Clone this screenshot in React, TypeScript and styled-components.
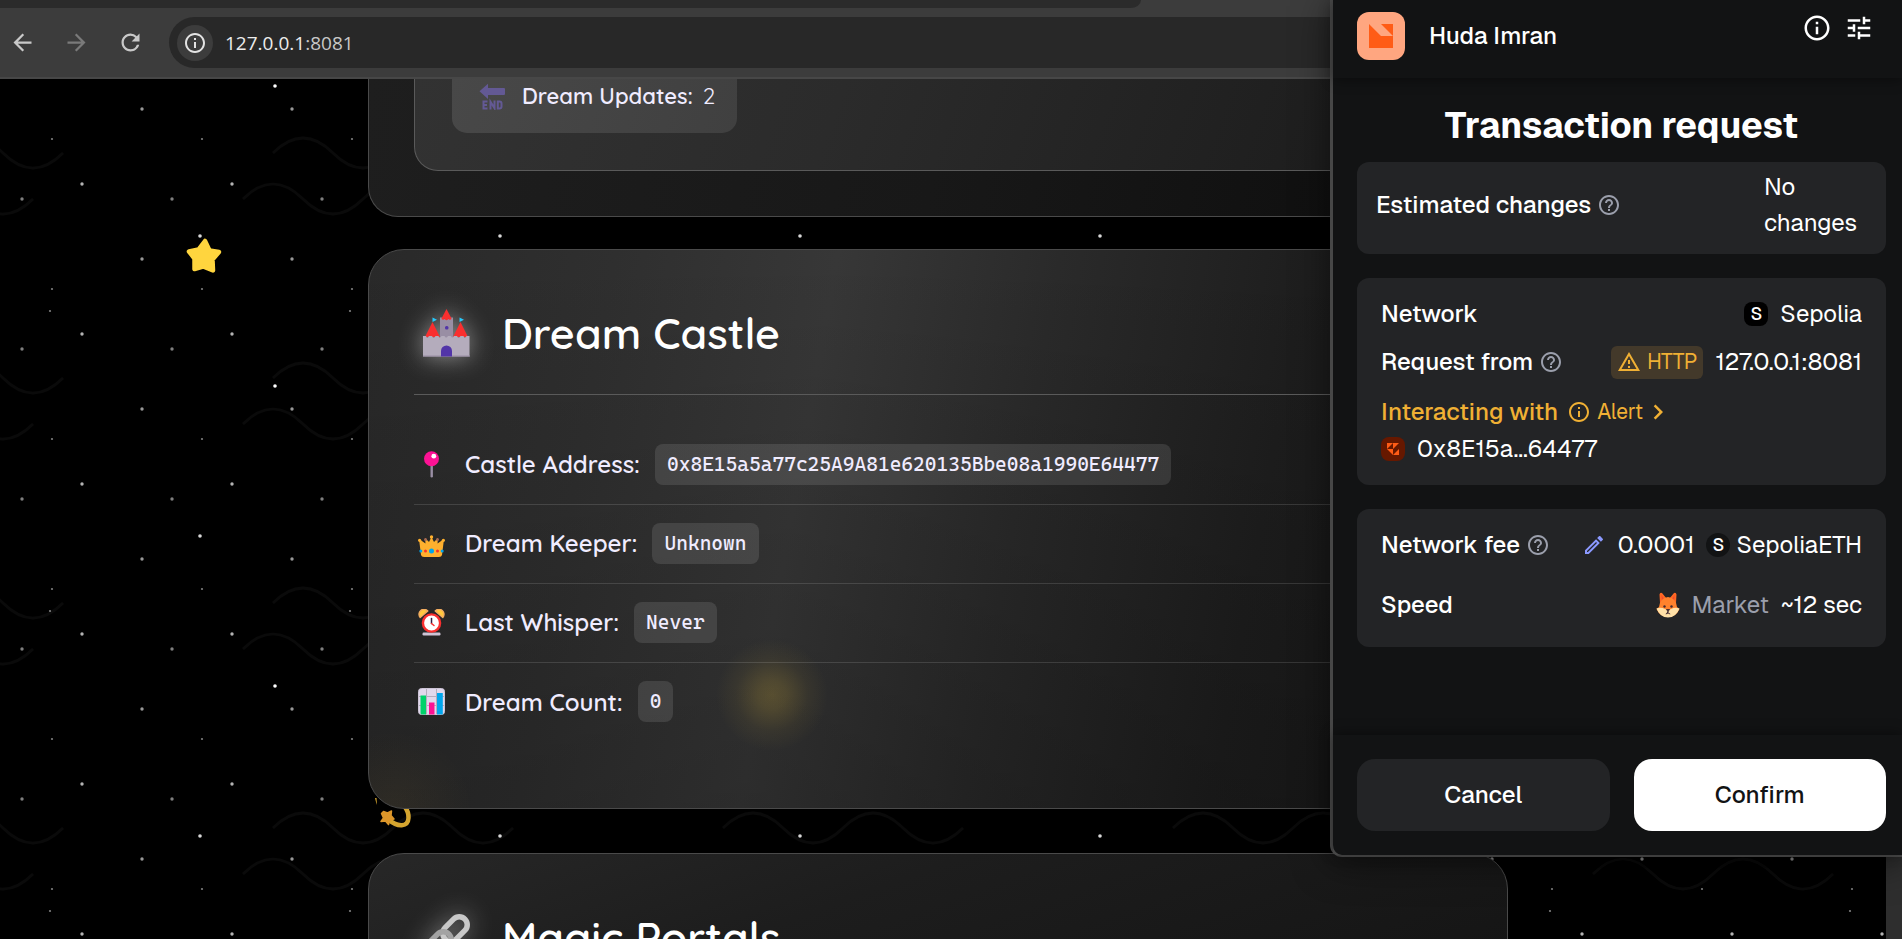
import React from "react";
import styled, { createGlobalStyle } from "styled-components";
import {
  MdArrowBack,
  MdArrowForward,
  MdChevronRight,
  MdInfoOutline,
  MdHelpOutline,
  MdOutlineEdit,
  MdOutlineWarningAmber,
  MdRefresh,
  MdTune,
} from "react-icons/md";

const pageFont = '"Quicksand", "Nunito", sans-serif';
const walletFont = '"Geist", "Inter", "Liberation Sans", sans-serif';
const codeFont = 'Consolas, "Cascadia Code", "DejaVu Sans Mono", monospace';
const chromeFont = '"Segoe UI", "Open Sans", "Noto Sans", sans-serif';

const GlobalStyle = createGlobalStyle`
  *, *::before, *::after { box-sizing: border-box; }
  body { margin: 0; background: #000; }
  h1, h2, dl, dd, dt { margin: 0; font-weight: inherit; }
  button { border: 0; padding: 0; background: none; color: inherit; font: inherit; cursor: pointer; }
  svg { display: block; flex: none; }
`;

const Screen = styled.div`
  position: relative;
  display: flex;
  flex-direction: column;
  height: 100vh;
  overflow: hidden;
  background: #000;
`;

/* ---------- Browser chrome ---------- */

const TabStrip = styled.div`
  position: relative;
  flex: none;
  height: 8px;
  background: #3c3c3c;
  &::before {
    content: "";
    display: block;
    width: 60%;
    height: 8px;
    border-bottom-right-radius: 12px 9px;
    background: #2b2b2b;
  }
`;

const Toolbar = styled.header`
  position: relative;
  display: flex;
  flex: none;
  align-items: center;
  gap: 27px;
  height: 71px;
  padding: 0 12px 0 9px;
  border-bottom: 2px solid #474747;
  background: #3c3c3c;
`;

const ToolButton = styled.button<{ $dim?: boolean }>`
  display: flex;
  color: ${(p) => (p.$dim ? "#7a7a7a" : "#c9c9c9")};
`;

const AddressBar = styled.div`
  display: flex;
  flex: 1;
  align-items: center;
  gap: 12px;
  height: 51px;
  margin-left: -2px;
  padding-left: 8px;
  border-radius: 26px;
  background: #282828;
`;

const SiteInfo = styled.button`
  display: flex;
  align-items: center;
  justify-content: center;
  width: 36px;
  height: 36px;
  border-radius: 50%;
  background: #3c3c3c;
  color: #e3e3e3;
`;

const Address = styled.span`
  color: #c7c7c7;
  font: 400 19px/26px ${chromeFont};
`;

const Host = styled.span`
  color: #ececec;
`;

/* ---------- Page ---------- */

const Sky = styled.svg`
  position: absolute;
  inset: 0;
  width: 100%;
  height: 100%;
`;

const Floating = styled.svg<{ $x: number; $y: number }>`
  position: absolute;
  left: ${(p) => p.$x}px;
  top: ${(p) => p.$y}px;
`;

const Viewport = styled.div`
  position: relative;
  display: grid;
  flex: 1;
  min-height: 0;
  grid-template-columns: 1fr 16px;
  overflow: hidden;
`;

const Scrollbar = styled.div`
  background: #2e2e2e;
`;

const Page = styled.main`
  display: flex;
  flex-direction: column;
  align-items: center;
  padding: 0 60px 0 50px;
  font-family: ${pageFont};
`;

const Card = styled.section`
  position: relative;
  flex: none;
  width: 100%;
  max-width: 1140px;
  margin-top: 44px;
  padding: 45px 45px 66px;
  border: 1px solid #4a4a4a;
  border-radius: 36px;
  background: linear-gradient(160deg, #272727 0%, #1d1d1d 35%, #121212 100%);
  color: #f0ecff;
`;

const ProfileCard = styled(Card)`
  margin-top: 0;
  padding: 0 45px 45px;
  border-top: 0;
  border-radius: 0 0 30px 30px;
  background: linear-gradient(100deg, #1e1e1e 0%, #181818 50%, #0f0f0f 90%);
`;

const CastleCard = styled(Card)`
  margin-top: 32px;
  background:
    radial-gradient(circle at 403px 445px, rgba(255, 208, 60, 0.2) 0, rgba(255, 208, 60, 0.16) 14px, rgba(255, 208, 60, 0.05) 36px, rgba(255, 208, 60, 0) 56px),
    radial-gradient(circle at 24px 560px, rgba(255, 190, 60, 0.05) 0, rgba(255, 190, 60, 0) 80px),
    linear-gradient(180deg, rgba(0, 0, 0, 0) 0%, rgba(0, 0, 0, 0.2) 100%),
    linear-gradient(100deg, #292929 0%, #2f2f2f 20%, #373737 38%, #2a2a2a 56%, #1e1e1e 76%, #161616 100%);
`;

const StatsPanel = styled.div`
  display: flex;
  padding: 0 37px 37px;
  border: 1px solid #5a5a5a;
  border-top: 0;
  border-radius: 0 0 24px 24px;
  background: linear-gradient(110deg, #323232 0%, #2b2b2b 40%, #1d1d1d 90%);
`;

const StatChip = styled.div`
  display: flex;
  align-items: center;
  height: 54px;
  padding: 0 22px 20px;
  border-radius: 0 0 15px 15px;
  background: linear-gradient(110deg, #484848, #404040);
  font-size: 22px;
  line-height: 34px;
`;

const StatIcon = styled.span`
  display: flex;
  justify-content: center;
  width: 37px;
  margin-right: 11px;
`;

const StatLabel = styled.span`
  margin-right: 10px;
  font-weight: 600;
`;

const CardHeader = styled.header`
  display: flex;
  align-items: center;
  gap: 24px;
  padding-bottom: 23px;
  border-bottom: 1px solid #5a5a5a;
`;

const CardIcon = styled.span`
  display: flex;
  justify-content: center;
  width: 64px;
  filter: drop-shadow(0 0 12px rgba(255, 255, 255, 0.5));
`;

const CardTitle = styled.h2`
  color: #fff;
  font-size: 43px;
  font-weight: 600;
  line-height: 76px;
`;

const Facts = styled.dl`
  margin-top: 31px;
`;

const Fact = styled.div`
  display: flex;
  align-items: center;
  height: 79px;
  padding-bottom: 2px;
  border-bottom: 1px solid rgba(255, 255, 255, 0.13);
  &:last-child {
    border-bottom: 0;
  }
`;

const FactIcon = styled.span`
  display: flex;
  justify-content: center;
  width: 35px;
  margin-right: 16px;
`;

const FactLabel = styled.dt`
  margin-right: 15px;
  font-size: 24px;
  font-weight: 600;
  line-height: 40px;
`;

const FactValue = styled.dd`
  padding: 0 12px;
  border-radius: 8px;
  background: rgba(255, 255, 255, 0.11);
  font: 400 20px/41px ${codeFont};
`;

/* ---------- Wallet popup ---------- */

const Wallet = styled.aside`
  position: absolute;
  top: 0;
  right: 0;
  width: 572px;
  max-width: 100%;
  border-bottom: 2px solid #474747;
  border-left: 3px solid #474747;
  border-bottom-left-radius: 12px;
  background: #121314;
  box-shadow: 0 6px 36px rgba(0, 0, 0, 0.5);
  color: #fff;
  font: 500 24px/36px ${walletFont};
`;

const WalletHeader = styled.header`
  display: flex;
  align-items: flex-start;
  padding: 12px 28px 18px 24px;
  box-shadow: 0 2px 12px rgba(0, 0, 0, 0.4);
`;

const AccountButton = styled.button`
  display: flex;
  align-items: center;
  gap: 24px;
  margin-right: auto;
`;

const HeaderButton = styled.button`
  display: flex;
  margin: 1px 0 0 12px;
`;

const WalletBody = styled.div`
  padding: 18px 16px 88px 24px;
`;

const WalletTitle = styled.h1`
  margin-bottom: 6px;
  font-size: 36px;
  font-weight: 700;
  line-height: 60px;
  text-align: center;
`;

const Box = styled.section`
  margin-bottom: 24px;
  padding: 12px 24px;
  border-radius: 12px;
  background: #232426;
`;

const ChangesBox = styled(Box)`
  display: flex;
  align-items: center;
  justify-content: space-between;
  padding: 7px 19px 13px;
`;

const FeeBox = styled(Box)`
  display: grid;
  gap: 12px;
  margin-bottom: 0;
  padding-bottom: 18px;
`;

const Row = styled.div`
  display: flex;
  align-items: center;
  justify-content: space-between;
  height: 48px;
`;

const Label = styled.span`
  display: flex;
  align-items: center;
  gap: 6px;
  svg {
    color: #9b9fac;
  }
`;

const Value = styled.span<{ $gap?: number }>`
  display: flex;
  align-items: center;
  gap: ${(p) => p.$gap ?? 12}px;
  font-weight: 400;
`;

const ChangesValue = styled.span`
  width: 103px;
  font-weight: 400;
`;

const Muted = styled.span`
  color: #9b9fac;
`;

const NetworkMark = styled.span<{ $round?: boolean }>`
  display: flex;
  align-items: center;
  justify-content: center;
  width: 24px;
  height: 24px;
  border-radius: ${(p) => (p.$round ? "50%" : "8px")};
  background: ${(p) => (p.$round ? "#121314" : "#000")};
  font-size: 18px;
  font-weight: 500;
  line-height: 24px;
`;

const HttpTag = styled.span`
  display: flex;
  align-items: center;
  gap: 6px;
  height: 33px;
  padding: 0 6px;
  border-radius: 6px;
  background: #43392a;
  color: #f0b034;
  font-size: 21px;
`;

const Contract = styled.div`
  display: grid;
  gap: 1px;
  padding: 8px 0 6px;
`;

const AlertLine = styled.div`
  display: flex;
  align-items: center;
  gap: 9px;
  color: #f0b034;
`;

const AlertButton = styled.button`
  display: flex;
  align-items: center;
  gap: 6px;
  font-size: 21px;
  font-weight: 400;
  svg:last-child {
    margin-left: -6px;
  }
`;

const WalletFooter = styled.footer`
  display: grid;
  grid-template-columns: 1fr 1fr;
  gap: 24px;
  padding: 24px 16px 24px 24px;
  box-shadow: 0 -2px 12px rgba(0, 0, 0, 0.4);
`;

const ActionButton = styled.button<{ $primary?: boolean }>`
  height: 72px;
  border-radius: 18px;
  background: ${(p) => (p.$primary ? "#fff" : "#232426")};
  color: ${(p) => (p.$primary ? "#121314" : "#fff")};
`;

/* ---------- Drawings ---------- */

type Dot = [number, number, number, number];

const denseStars: Dot[] = [
  [82, 34, 2, 0.7],
  [22, 49, 2, 0.5],
  [142, 109, 2, 0.6],
  [52, 139, 1, 0.5],
];

const sparseStars: Dot[] = [
  [275, 86, 2, 1],
  [200, 236, 2, 0.85],
  [50, 11, 1, 0.5],
];

const wave = (x: number, y: number) => `M${x} ${y}q30 -30 60 0t60 0t60 0t60 0`;

const NightSky = () => (
  <Sky aria-hidden="true">
    <defs>
      <pattern id="dense" width="150" height="150" patternUnits="userSpaceOnUse">
        {denseStars.map(([x, y, r, o]) => (
          <circle key={x} cx={x} cy={y} r={r === 2 ? 1.7 : 1.1} fill="#fff" opacity={o} />
        ))}
      </pattern>
      <pattern id="sparse" width="300" height="300" patternUnits="userSpaceOnUse">
        {sparseStars.map(([x, y, r, o]) => (
          <circle key={x} cx={x} cy={y} r={r === 2 ? 1.8 : 1.1} fill="#fff" opacity={o} />
        ))}
      </pattern>
      <pattern id="waves" width="450" height="225" patternUnits="userSpaceOnUse">
        <g fill="none" stroke="#0a0a0a" strokeWidth="2.6">
          <path d={wave(273, 153)} />
          <path d={wave(-177, 153)} />
          <path d={wave(243, 199)} />
          <path d={wave(-207, 199)} />
        </g>
      </pattern>
    </defs>
    <rect width="100%" height="100%" fill="url(#waves)" />
    <rect width="100%" height="100%" fill="url(#dense)" />
    <rect width="100%" height="100%" fill="url(#sparse)" />
  </Sky>
);

const FloatingStar = () => (
  <Floating $x={184} $y={158} width="40" height="40" viewBox="0 0 40 40" aria-hidden="true">
    <path
      d="M21 4L25.5 13.5L35 15L28.500 22.500L29 33.500L19 29.500L10.500 32L10.500 21.500L5 14.500L14.500 12.500Z"
      fill="#ffd53e"
      stroke="#ffd53e"
      strokeWidth="4.500"
      strokeLinejoin="round"
    />
  </Floating>
);

const FloatingDizzy = () => (
  <Floating $x={370} $y={711} width="46" height="46" viewBox="0 0 46 46" aria-hidden="true">
    <path d="M18 29C28 38 38 37 38.500 28C39 20 32 12 22 6" fill="none" stroke="#d5a52f" strokeWidth="4.500" />
    <path d="M5 8L6 12L7 15L6.500 8Z" fill="#d5a52f" />
    <path
      d="M13.500 21.500L17.500 23L21.500 21L21 25.500L24 29L19.800 30L18.500 34.500L15.500 31L11 31.500L13.500 28L11.500 23.500Z"
      fill="#dc962a"
      stroke="#dc962a"
      strokeWidth="1.500"
      strokeLinejoin="round"
    />
  </Floating>
);

const EndArrow = () => (
  <svg width="27" height="27" viewBox="0 0 27 27" aria-hidden="true">
    <path d="M.5 8.200L9 .8V5H25a1 1 0 0 1 1 1v5a1 1 0 0 1-1 1H9v4Z" fill="#635994" />
    <g fill="none" stroke="#635994" strokeWidth="2">
      <path d="M8.500 18.500H4.500V25.500H8.500M4.500 22H8" />
      <path d="M11.500 26.500V18.800L15.500 25.200V17.500" />
      <path d="M18.800 18.500H20.500Q22.500 18.500 22.500 20.500V23.500Q22.500 25.500 20.500 25.500H18.800Z" />
    </g>
  </svg>
);

const Castle = () => (
  <svg width="47" height="48" viewBox="0 0 47 48" aria-hidden="true">
    <path d="M17 8.500h3v1.500h2V8.500h3v1.500h2V8.500h3V32H17Z" fill="#998ea4" />
    <path d="M23.500 0L28.500 9.500a1.700 1.700 0 0 1-3.300 0a1.700 1.700 0 0 1-3.400 0a1.700 1.700 0 0 1-3.300 0Z" fill="#f92f2f" />
    <rect x="22" y="17" width="3.500" height="3.500" rx="1.500" fill="#5235a8" />
    <path d="M9.500 8.500L14 10.800L9.500 13ZM36.500 8.500L41 10.800L36.500 13Z" fill="#26c9fc" />
    <path d="M9.500 13L17 28H2ZM37.500 13L45 28H30Z" fill="#f92f2f" />
    <path
      d="M0 27h3q1 3 3 0h3q1.500 3 3.500 0h3q1 3 3 0h3q1.500 3 3.500 0h3q1 3 3 0h3q1.500 3 3.500 0h3q1 3 3 0h3V47.500H0Z"
      fill="#b4acbc"
    />
    <path d="M0 46.500H47V47.500H0Z" fill="#998ea4" />
    <path d="M18 47.500V42a5.500 5.500 0 0 1 11 0v5.500Z" fill="#5235a8" />
  </svg>
);

const Pin = () => (
  <svg width="27" height="27" viewBox="0 0 27 27" aria-hidden="true">
    <rect x="12.500" y="13" width="2.400" height="13.500" rx="1.200" fill="#998ea4" />
    <circle cx="13.500" cy="7.800" r="7.500" fill="#fc1294" />
    <circle cx="15.800" cy="5.200" r="2.400" fill="#fff" />
  </svg>
);

const Crown = () => (
  <svg width="27" height="27" viewBox="0 0 27 27" aria-hidden="true">
    <path
      d="M1 9L7.500 13.500L7 8L11 12L13.500 7L16 12L20 8L19.500 13.500L26 9L24 25Q23.500 27 21 27H6Q3.500 27 3 25Z"
      fill="#ffb02e"
    />
    <g fill="#ffb02e">
      <circle cx="1.600" cy="10.300" r="1.600" />
      <circle cx="13.500" cy="7" r="1.700" />
      <circle cx="25.400" cy="10.300" r="1.600" />
    </g>
    <g fill="#a56953">
      <circle cx="7.500" cy="9.500" r="1.500" />
      <circle cx="19.500" cy="9.500" r="1.500" />
    </g>
    <g fill="#f92f2f">
      <circle cx="7.500" cy="21" r="1.500" />
      <circle cx="19.500" cy="21" r="1.500" />
    </g>
    <g fill="#00a6ed">
      <circle cx="13.500" cy="21" r="2.500" />
      <circle cx="2.800" cy="21" r="1.500" />
      <circle cx="24.200" cy="21" r="1.500" />
    </g>
  </svg>
);

const AlarmClock = () => (
  <svg width="27" height="27" viewBox="0 0 27 27" aria-hidden="true">
    <rect x="4.500" y="23.500" width="18" height="3" rx="1.200" fill="#cdc4d6" />
    <path d="M2.200 8.500A5 5 0 0 1 9.800 2ZM24.800 8.500A5 5 0 0 0 17.200 2Z" fill="#ffc83d" stroke="#f3ad61" strokeWidth="1.400" strokeLinejoin="round" />
    <circle cx="13.500" cy="14" r="8.600" fill="#fff" stroke="#f92f2f" strokeWidth="2.400" />
    <path d="M13.500 9.500V14.500" stroke="#321b41" strokeWidth="1.500" strokeLinecap="round" />
    <path d="M13.500 14.500L16 16.500" stroke="#f92f2f" strokeWidth="1.500" strokeLinecap="round" />
  </svg>
);

const BarChart = () => (
  <svg width="27" height="27" viewBox="0 0 27 27" aria-hidden="true">
    <rect x=".5" y=".5" width="26" height="26" rx="3" fill="#e1d8ec" stroke="#cdc4d6" />
    <path d="M8.500 1V26M18.500 1V26M1 8.500H26M1 17.500H26" stroke="#b4acbc" />
    <path d="M2.500 7.500H8V26.500H4Q2.500 26.500 2.500 25Z" fill="#00d26a" />
    <path d="M11 14.500H16.500V26.500H11Z" fill="#fc1294" />
    <path d="M19 5H24.800V26.500H19Z" fill="#00a6ed" />
  </svg>
);

const Links = () => (
  <svg width="47" height="48" viewBox="0 0 47 48" aria-hidden="true">
    <g fill="none" strokeWidth="5.500">
      <rect x="-8" y="-14" width="16" height="28" rx="8" transform="translate(32 16) rotate(45)" stroke="#c8c8c8" />
      <rect x="-8" y="-14" width="16" height="28" rx="8" transform="translate(16 31) rotate(45)" stroke="#a3a3a3" />
    </g>
  </svg>
);

const AccountAvatar = () => (
  <svg width="48" height="48" viewBox="0 0 48 48" aria-hidden="true">
    <rect width="48" height="48" rx="12" fill="#ffa680" />
    <path d="M12 12L24 24H36V36H12Z" fill="#ff5c16" />
    <path d="M24 12H36V24Z" fill="#ff5c16" />
  </svg>
);

const ContractAvatar = () => (
  <svg width="24" height="24" viewBox="0 0 24 24" aria-hidden="true">
    <rect width="24" height="24" rx="8" fill="#661800" />
    <g fill="#ff5c16">
      <path d="M6 6H12L6 12Z" />
      <path d="M12 6H18L12 12V6Z" />
      <path d="M6 12H12V18Z" />
      <path d="M18 12V18H12Z" />
    </g>
  </svg>
);

const Fox = () => (
  <svg width="24" height="26" viewBox="0 0 24 26" aria-hidden="true">
    <path d="M4 11L3.500 2.500Q4 0 6 1L11 7H13L18 1Q20 0 20.500 2.500L20 11Z" fill="#ff6723" />
    <path d="M5.500 3L8.500 8L6 9.500ZM18.500 3L15.500 8L18 9.500Z" fill="#ca0b4a" opacity=".3" />
    <path d="M12 5Q20 6 21 15L23.500 17Q20 25 12 25Q4 25 .5 17L3 15Q4 6 12 5Z" fill="#ff822d" />
    <path d="M.5 16.500Q5 15 9 17L12 18.500L15 17Q19 15 23.500 16.500Q20 25.500 12 25.500Q4 25.500 .5 16.500Z" fill="#ffe1a8" />
    <circle cx="8.500" cy="14.500" r="1.200" fill="#402a32" />
    <circle cx="15.500" cy="14.500" r="1.200" fill="#402a32" />
    <path d="M10.500 17.500H13.500L12 19.500ZM12 19V21L9.800 22M12 21L14.200 22" fill="#402a32" stroke="#402a32" strokeWidth=".9" />
  </svg>
);

/* ---------- Screen ---------- */

const facts = [
  { icon: <Pin />, label: "Castle Address:", value: "0x8E15a5a77c25A9A81e620135Bbe08a1990E64477" },
  { icon: <Crown />, label: "Dream Keeper:", value: "Unknown" },
  { icon: <AlarmClock />, label: "Last Whisper:", value: "Never" },
  { icon: <BarChart />, label: "Dream Count:", value: "0" },
];

export default function App() {
  return (
    <>
      <GlobalStyle />
      <Screen>
        <NightSky />
        <TabStrip />
        <Toolbar>
          <ToolButton aria-label="Back">
            <MdArrowBack size={27} />
          </ToolButton>
          <ToolButton aria-label="Forward" $dim>
            <MdArrowForward size={27} />
          </ToolButton>
          <ToolButton aria-label="Reload">
            <MdRefresh size={27} />
          </ToolButton>
          <AddressBar>
            <SiteInfo aria-label="View site information">
              <MdInfoOutline size={24} />
            </SiteInfo>
            <Address>
              <Host>127.0.0.1</Host>:8081
            </Address>
          </AddressBar>
        </Toolbar>

        <Viewport>
          <FloatingStar />
          <FloatingDizzy />
          <Page>
            <ProfileCard>
              <StatsPanel>
                <StatChip>
                  <StatIcon>
                    <EndArrow />
                  </StatIcon>
                  <StatLabel>Dream Updates:</StatLabel>
                  <span>2</span>
                </StatChip>
              </StatsPanel>
            </ProfileCard>

            <CastleCard>
              <CardHeader>
                <CardIcon>
                  <Castle />
                </CardIcon>
                <CardTitle>Dream Castle</CardTitle>
              </CardHeader>
              <Facts>
                {facts.map((fact) => (
                  <Fact key={fact.label}>
                    <FactIcon>{fact.icon}</FactIcon>
                    <FactLabel>{fact.label}</FactLabel>
                    <FactValue>{fact.value}</FactValue>
                  </Fact>
                ))}
              </Facts>
            </CastleCard>

            <Card>
              <CardHeader>
                <CardIcon>
                  <Links />
                </CardIcon>
                <CardTitle>Magic Portals</CardTitle>
              </CardHeader>
            </Card>
          </Page>
          <Scrollbar />
        </Viewport>

        <Wallet>
          <WalletHeader>
            <AccountButton>
              <AccountAvatar />
              Huda Imran
            </AccountButton>
            <HeaderButton aria-label="Details">
              <MdInfoOutline size={30} />
            </HeaderButton>
            <HeaderButton aria-label="Settings">
              <MdTune size={30} />
            </HeaderButton>
          </WalletHeader>

          <WalletBody>
            <WalletTitle>Transaction request</WalletTitle>
            <ChangesBox>
              <Label>
                Estimated changes
                <MdHelpOutline size={24} />
              </Label>
              <ChangesValue>No changes</ChangesValue>
            </ChangesBox>

            <Box>
              <Row>
                <Label>Network</Label>
                <Value>
                  <NetworkMark>S</NetworkMark>
                  Sepolia
                </Value>
              </Row>
              <Row>
                <Label>
                  Request from
                  <MdHelpOutline size={24} />
                </Label>
                <Value>
                  <HttpTag>
                    <MdOutlineWarningAmber size={24} />
                    HTTP
                  </HttpTag>
                  127.0.0.1:8081
                </Value>
              </Row>
              <Contract>
                <AlertLine>
                  Interacting with
                  <AlertButton>
                    <MdInfoOutline size={24} />
                    Alert
                    <MdChevronRight size={30} />
                  </AlertButton>
                </AlertLine>
                <Value>
                  <ContractAvatar />
                  0x8E15a...64477
                </Value>
              </Contract>
            </Box>

            <FeeBox>
              <Row>
                <Label>
                  Network fee
                  <MdHelpOutline size={24} />
                </Label>
                <Value>
                  <MdOutlineEdit size={24} color="#8b99ff" />
                  0.0001
                  <Value $gap={6}>
                    <NetworkMark $round>S</NetworkMark>
                    SepoliaETH
                  </Value>
                </Value>
              </Row>
              <Row>
                <Label>Speed</Label>
                <Value>
                  <Fox />
                  <Muted>Market</Muted>
                  ~12 sec
                </Value>
              </Row>
            </FeeBox>
          </WalletBody>

          <WalletFooter>
            <ActionButton>Cancel</ActionButton>
            <ActionButton $primary>Confirm</ActionButton>
          </WalletFooter>
        </Wallet>
      </Screen>
    </>
  );
}
